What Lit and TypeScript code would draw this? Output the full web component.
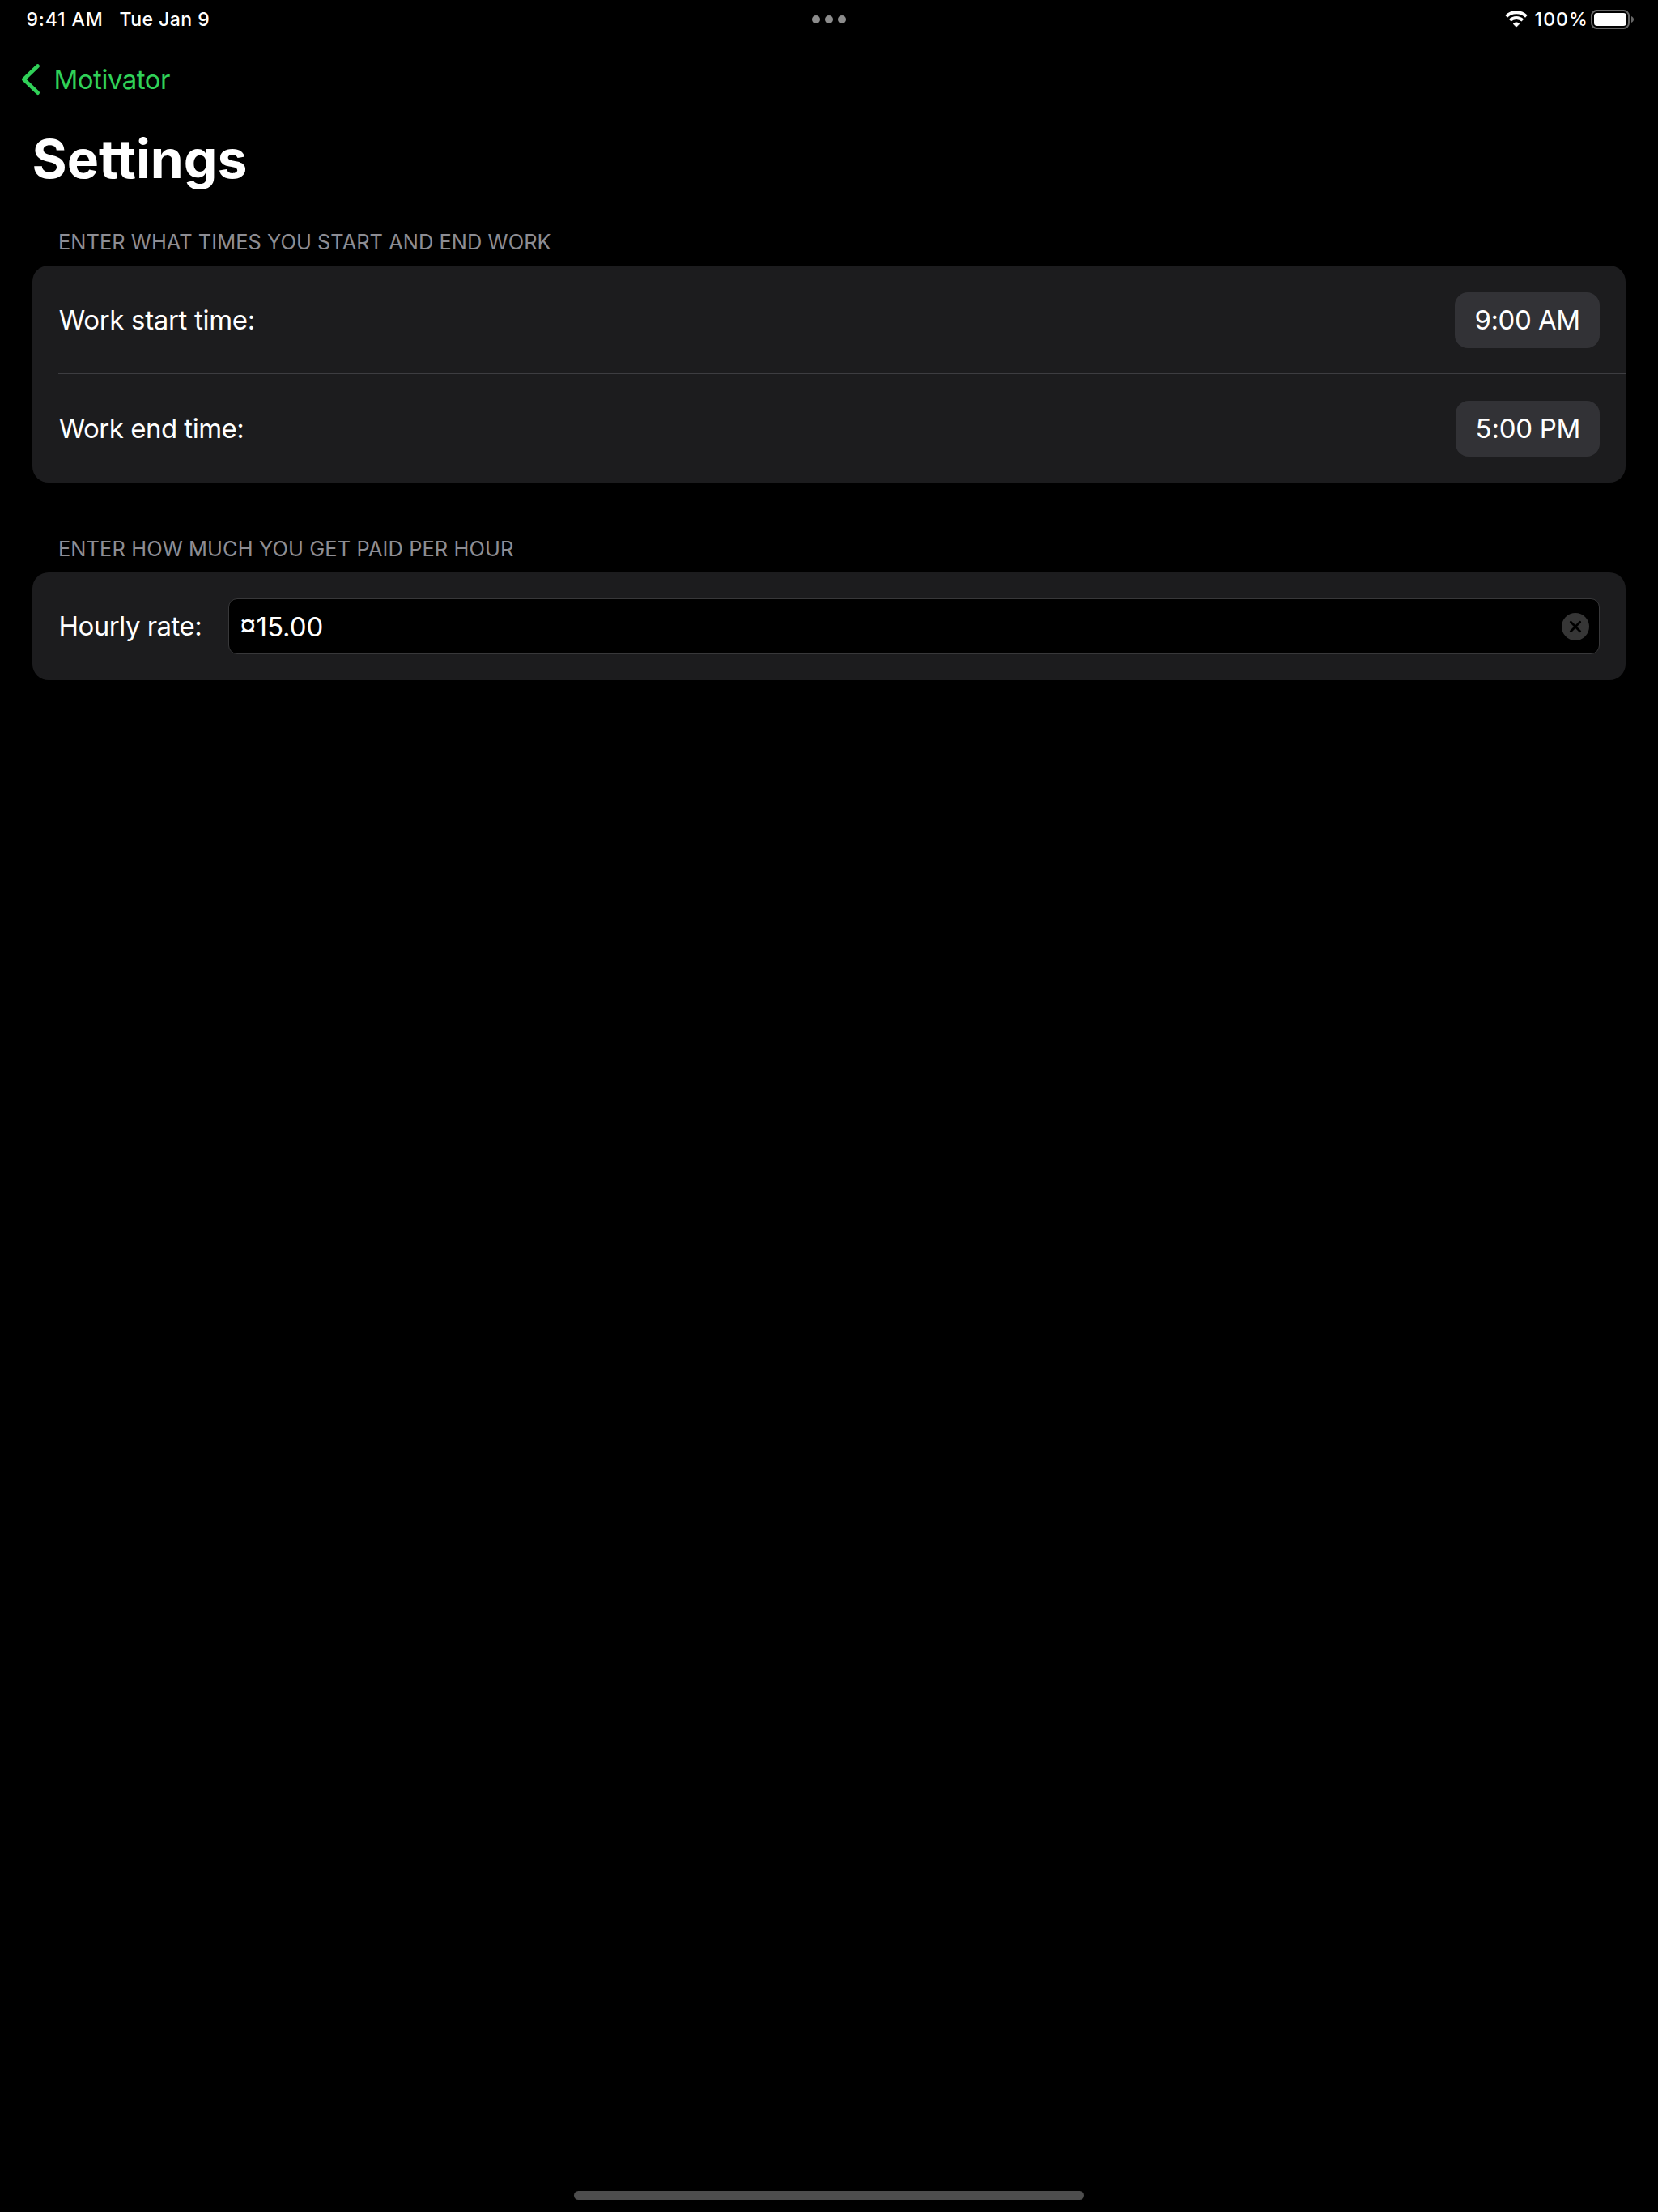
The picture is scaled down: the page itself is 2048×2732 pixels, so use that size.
import { LitElement, html, css } from "lit";
import { customElement, property } from "lit/decorators.js";

@customElement("status-bar")
class StatusBar extends LitElement {
  static styles = css`
    :host {
      display: grid;
      grid-template-columns: 1fr auto 1fr;
      align-items: center;
      height: 48px;
      padding: 0 30px 0 32px;
      font-size: 23px;
      font-weight: 450;
      line-height: 32px;
      white-space: pre;
    }
    .left {
      display: flex;
    }
    .time {
      width: 115px;
      margin-left: 0.4px;
      letter-spacing: 0.9px;
    }
    .date {
      letter-spacing: 0.48px;
    }
    .dots {
      display: flex;
      gap: 6px;
      margin-left: -2px;
    }
    .dot {
      width: 10px;
      height: 10px;
      border-radius: 50%;
      background: #8c8c8c;
    }
    .right {
      display: flex;
      justify-content: flex-end;
      align-items: center;
    }
    .percent {
      width: 69.5px;
      margin-left: 8.5px;
      letter-spacing: 1.1px;
    }
    svg {
      display: block;
      flex: none;
    }
  `;

  render() {
    return html`
      <div class="left">
        <span class="time">9:41 AM</span>
        <span class="date">Tue Jan 9</span>
      </div>
      <div class="dots"><i class="dot"></i><i class="dot"></i><i class="dot"></i></div>
      <div class="right">
        <svg width="28" height="22" viewBox="0 0 28 22" fill="none" stroke="#fff">
          <path d="M1.6 7.2a18.2 18.2 0 0 1 24.8 0" stroke-width="3.9" />
          <path d="M6.2 12.1a11.4 11.4 0 0 1 15.6 0" stroke-width="3.8" />
          <path d="M14 20.3l-3.8-3.8a5.8 5.8 0 0 1 7.6 0z" fill="#fff" stroke-width="0.8" stroke-linejoin="round" />
        </svg>
        <span class="percent">100%</span>
        <svg width="53" height="24" viewBox="0 0 53 24">
          <rect x="1" y="1" width="46" height="22" rx="6.6" fill="none" stroke="#666" stroke-width="2" />
          <rect x="4" y="4" width="40" height="16" rx="3.8" fill="#fff" />
          <path d="M50 8c4 1.6 4 6.4 0 8z" fill="#666" />
        </svg>
      </div>
    `;
  }
}

@customElement("settings-section")
class SettingsSection extends LitElement {
  @property() heading = "";
  @property({ type: Number }) spacing = 0;

  static styles = css`
    :host {
      display: block;
    }
    .heading {
      height: 58px;
      padding-left: 32px;
      font-size: 25.4px;
      line-height: 58px;
      color: #8d8d93;
      white-space: nowrap;
    }
    .card {
      border-radius: 20px;
      background: #1c1c1e;
      overflow: hidden;
    }
  `;

  render() {
    return html`
      <div class="heading" style="letter-spacing:${this.spacing}px">${this.heading}</div>
      <div class="card"><slot></slot></div>
    `;
  }
}

@customElement("app-root")
class AppRoot extends LitElement {
  static styles = css`
    :host {
      display: flex;
      flex-direction: column;
      box-sizing: border-box;
      width: 2048px;
      height: 2732px;
      background: #000;
      color: #fff;
      font-family: Inter, "Liberation Sans", sans-serif;
      overflow: hidden;
    }
    .nav {
      display: flex;
      align-items: center;
      height: 100px;
      padding-left: 26px;
      color: #30d158;
      font-size: 33px;
      line-height: 40px;
      letter-spacing: -0.5px;
    }
    .nav svg {
      margin-right: 16.5px;
    }
    h1 {
      margin: 0;
      height: 96px;
      padding-left: 39.5px;
      font-size: 66px;
      font-weight: 700;
      line-height: 96px;
      letter-spacing: -0.03px;
      font-feature-settings: "calt" 0, "liga" 0;
    }
    .sections {
      display: flex;
      flex-direction: column;
      gap: 53px;
      padding: 26px 40px 0;
    }
    .row {
      display: flex;
      align-items: center;
      justify-content: space-between;
      box-sizing: border-box;
      height: 134px;
      padding: 0 32px;
      font-size: 33px;
      line-height: 40px;
      white-space: nowrap;
    }
    .row.rate {
      height: 133px;
      justify-content: flex-start;
    }
    .row.first {
      height: 133px;
      padding-top: 1px;
    }
    .rule {
      height: 1px;
      margin-left: 32px;
      background: #3d3d41;
    }
    .start {
      margin-left: 0.7px;
      letter-spacing: -0.32px;
    }
    .end {
      margin-left: 0.7px;
      letter-spacing: -0.5px;
    }
    .pill {
      box-sizing: border-box;
      width: 179px;
      height: 69px;
      padding-left: 24.6px;
      border-radius: 16px;
      background: #323236;
      line-height: 69px;
      letter-spacing: -0.5px;
    }
    .pill.pm {
      width: 178px;
      letter-spacing: -0.26px;
    }
    .label {
      box-sizing: border-box;
      width: 210px;
      padding: 0 0 1px 0.6px;
      letter-spacing: -0.52px;
    }
    .field {
      display: flex;
      flex: 1;
      align-items: center;
      justify-content: space-between;
      box-sizing: border-box;
      height: 69px;
      padding: 0 12px 0 14px;
      border: 1px solid #38383a;
      border-radius: 11px;
      background: #000;
    }
    .amount {
      display: flex;
      align-items: center;
    }
    .sign {
      width: 19.5px;
      margin-left: -0.8px;
      margin-right: 0.8px;
      padding-bottom: 1px;
      font-family: "Liberation Sans", Arial, sans-serif;
      font-size: 36px;
    }
    svg {
      display: block;
      flex: none;
    }
    .home {
      width: 630px;
      height: 11px;
      margin: auto auto 15px;
      border-radius: 5.5px;
      background: #4d4d4d;
    }
  `;

  render() {
    return html`
      <status-bar></status-bar>
      <div class="nav">
        <svg width="24" height="40" viewBox="0 0 24 40" fill="none" stroke="#30d158" stroke-width="4.8" stroke-linecap="round" stroke-linejoin="round">
          <path d="M20.6 3.6L3.4 20.1L20.6 36.6" />
        </svg>
        <span>Motivator</span>
      </div>
      <h1>Settings</h1>
      <div class="sections">
        <settings-section heading="ENTER WHAT TIMES YOU START AND END WORK" .spacing=${0.05}>
          <div class="row first"><span class="start">Work start time:</span><span class="pill">9:00 AM</span></div>
          <div class="rule"></div>
          <div class="row"><span class="end">Work end time:</span><span class="pill pm">5:00 PM</span></div>
        </settings-section>
        <settings-section heading="ENTER HOW MUCH YOU GET PAID PER HOUR" .spacing=${0.11}>
          <div class="row rate">
            <span class="label">Hourly rate:</span>
            <div class="field">
              <span class="amount"><span class="sign">¤</span><span>15.00</span></span>
              <svg width="34" height="34" viewBox="0 0 34 34">
                <circle cx="17" cy="17" r="17" fill="#363636" />
                <path d="M11.3 11.3l11.4 11.4M22.7 11.3L11.3 22.7" stroke="#000" stroke-width="2.8" stroke-linecap="round" />
              </svg>
            </div>
          </div>
        </settings-section>
      </div>
      <div class="home"></div>
    `;
  }
}
